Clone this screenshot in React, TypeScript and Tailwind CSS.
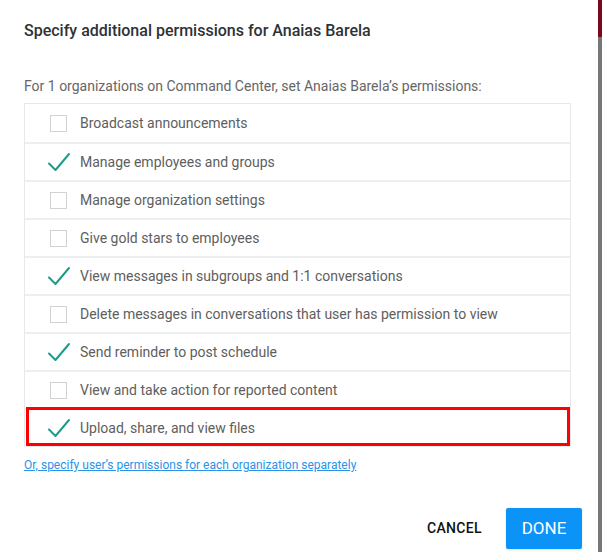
import { useState } from "react";

const PERMISSIONS = [
  { label: "Broadcast announcements", on: false },
  { label: "Manage employees and groups", on: true },
  { label: "Manage organization settings", on: false },
  { label: "Give gold stars to employees", on: false },
  { label: "View messages in subgroups and 1:1 conversations", on: true },
  { label: "Delete messages in conversations that user has permission to view", on: false },
  { label: "Send reminder to post schedule", on: true },
  { label: "View and take action for reported content", on: false },
  { label: "Upload, share, and view files", on: true },
];

function Check() {
  return (
    <svg width="24" height="20" viewBox="0 0 24 20" fill="none">
      <path d="M2 11.5 L8.5 18 L22 2" stroke="#1a9d89" strokeWidth="2" strokeLinecap="round" strokeLinejoin="round" />
    </svg>
  );
}

export default function App() {
  const [perms, setPerms] = useState(PERMISSIONS);

  const toggle = (i: number) =>
    setPerms(perms.map((p, j) => (j === i ? { ...p, on: !p.on } : p)));

  return (
    <div className="flex w-[602px] h-[552px] bg-white" style={{ fontFamily: "Roboto, 'Liberation Sans', sans-serif" }}>
      <div className="w-[598px] flex flex-col pl-6 pr-[27px]">
        {/* Title */}
        <h1 className="mt-[20px] text-[16px] leading-[22px] font-medium text-[#2d3237]">
          Specify additional permissions for Anaias Barela
        </h1>

        <p className="mt-[34px] text-[14px] leading-[20px] text-[#666]">
          For 1 organizations on Command Center, set Anaias Barela’s permissions:
        </p>

        {/* Permission list */}
        <div className="relative mt-[7px] border border-[#e6e9eb]">
          {perms.map((p, i) => (
            <div
              key={i}
              onClick={() => toggle(i)}
              className={`flex items-center h-[38px] cursor-pointer ${i > 0 ? "border-t-2 border-[#eceef0]" : ""}`}
            >
              <div className="w-[55px] flex justify-center pl-[12px]">
                {p.on ? (
                  <Check />
                ) : (
                  <span className="block w-[17px] h-[17px] border border-[#cfd3d6] bg-white" />
                )}
              </div>
              <span className="text-[14px] text-[#5e5e5e]">{p.label}</span>
            </div>
          ))}
          {/* highlight annotation */}
          <div className="absolute left-[1px] right-0 bottom-0 h-[39px] border-[3px] border-[#ff0000] pointer-events-none" />
        </div>

        <a href="#" className="mt-[10px] text-[12px] leading-[16px] text-[#2a93e8] underline self-start">
          Or, specify user’s permissions for each organization separately
        </a>

        {/* Actions */}
        <div className="mt-auto mb-[3px] flex items-center justify-end gap-6">
          <button className="text-[14px] font-medium text-[#111] tracking-wide">CANCEL</button>
          <button className="w-[76px] h-[41px] rounded-[2px] bg-[#0c93f7] text-white text-[17px] shadow-sm -mr-[11px]">
            DONE
          </button>
        </div>
      </div>
      {/* side scroll strip */}
      <div className="w-[4px] flex flex-col">
        <div className="h-[37px] bg-[#7a0620]" />
        <div className="flex-1 bg-[#777]" />
      </div>
    </div>
  );
}
